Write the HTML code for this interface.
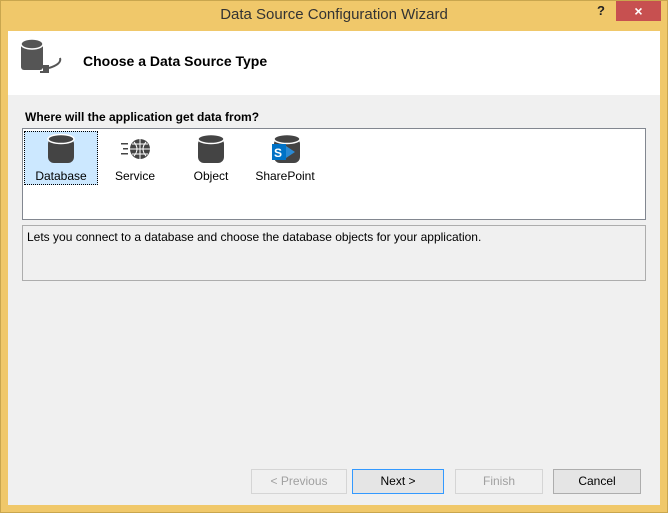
<!DOCTYPE html><html><head><style>
body{margin:0;width:668px;height:513px;background:#f0c86a;position:relative;font-family:"Liberation Sans",sans-serif;font-size:12px;overflow:hidden}
.a{position:absolute}
.btn{position:absolute;top:469px;height:23px;border:1px solid #adadad;background:#e5e5e5;text-align:center;line-height:23px;font-size:12px;color:#000}
.dis{border-color:#d5d5d5;background:#f0f0f0;color:#a0a0a0}
.lbl{position:absolute;top:169px;font-size:12px;text-align:center}
</style></head><body>
<div class="a" style="left:0;top:0;width:668px;height:513px;box-sizing:border-box;border:1px solid #c9a64e"></div>
<div class="a" style="left:0;top:6px;width:668px;text-align:center;font-size:15px;color:#333">Data Source Configuration Wizard</div>
<div class="a" style="left:597px;top:3px;font-weight:bold;font-size:13px;color:#222">?</div>
<div class="a" style="left:616px;top:1px;width:45px;height:20px;background:#c75050;color:#fff;text-align:center;line-height:20px;font-size:14px;font-weight:bold">×</div>
<div class="a" style="left:8px;top:31px;width:652px;height:474px;background:#f0f0f0"></div>
<div class="a" style="left:8px;top:31px;width:652px;height:64px;background:#fff"></div>
<svg class="a" style="left:18px;top:38px" width="48" height="40"><rect x="3" y="4" width="22" height="28" rx="3" fill="#555"/><ellipse cx="14" cy="6" rx="11" ry="5" fill="#555" stroke="#fff" stroke-width="1.5"/><rect x="25" y="27" width="6" height="8" fill="#555"/><path d="M31 30 Q44 26 42 20" stroke="#555" stroke-width="2" fill="none"/><rect x="22" y="28" width="4" height="2" fill="#555"/><rect x="22" y="33" width="4" height="2" fill="#555"/></svg>
<div class="a" style="left:83px;top:53px;font-weight:bold;font-size:14px">Choose a Data Source Type</div>
<div class="a" style="left:25px;top:110px;font-weight:bold;font-size:12px">Where will the application get data from?</div>
<div class="a" style="left:22px;top:128px;width:622px;height:90px;background:#fff;border:1px solid #828790"></div>
<div class="a" style="left:24px;top:131px;width:72px;height:52px;background:#cce8ff;border:1px dotted #000"></div>
<svg class="a" style="left:46px;top:133px" width="30" height="34"><rect x="2" y="5" width="26" height="25" rx="6" fill="#444"/><ellipse cx="15" cy="6" rx="13" ry="4.5" fill="#444" stroke="#fff" stroke-width="1.5"/></svg>
<div class="lbl" style="left:24px;width:74px">Database</div>
<svg class="a" style="left:120px;top:137px" width="34" height="24"><rect x="1" y="6" width="7" height="1.5" fill="#444"/><rect x="3" y="11" width="5" height="1.5" fill="#444"/><rect x="1" y="16" width="7" height="1.5" fill="#444"/><circle cx="20" cy="12" r="10" fill="#444"/><path d="M10 12h20M20 2v20M14 5q6 7 0 14M26 5q-6 7 0 14M12 7h16M12 17h16" stroke="#fff" stroke-width="1" fill="none"/></svg>
<div class="lbl" style="left:100px;width:70px">Service</div>
<svg class="a" style="left:196px;top:133px" width="30" height="34"><rect x="2" y="5" width="26" height="25" rx="6" fill="#444"/><ellipse cx="15" cy="6" rx="13" ry="4.5" fill="#444" stroke="#fff" stroke-width="1.5"/></svg>
<div class="lbl" style="left:176px;width:70px">Object</div>
<svg class="a" style="left:268px;top:133px" width="34" height="34"><rect x="6" y="5" width="26" height="25" rx="6" fill="#444"/><ellipse cx="19" cy="6" rx="13" ry="4.5" fill="#444" stroke="#fff" stroke-width="1.5"/><path d="M4 11h14v16H4z" fill="#0072c6"/><path d="M18 13l9 6-9 6z" fill="#2a8ad4"/><text x="6" y="24" fill="#fff" font-size="12" font-weight="bold" font-family="Liberation Sans">S</text></svg>
<div class="lbl" style="left:250px;width:70px">SharePoint</div>
<div class="a" style="left:22px;top:225px;width:622px;height:54px;border:1px solid #adadad"></div>
<div class="a" style="left:27px;top:230px;font-size:12px">Lets you connect to a database and choose the database objects for your application.</div>
<div class="btn dis" style="left:251px;width:94px">&lt; Previous</div>
<div class="btn" style="left:352px;width:90px;border-color:#3399ff">Next &gt;</div>
<div class="btn dis" style="left:455px;width:86px">Finish</div>
<div class="btn" style="left:553px;width:86px">Cancel</div>
</body></html>
